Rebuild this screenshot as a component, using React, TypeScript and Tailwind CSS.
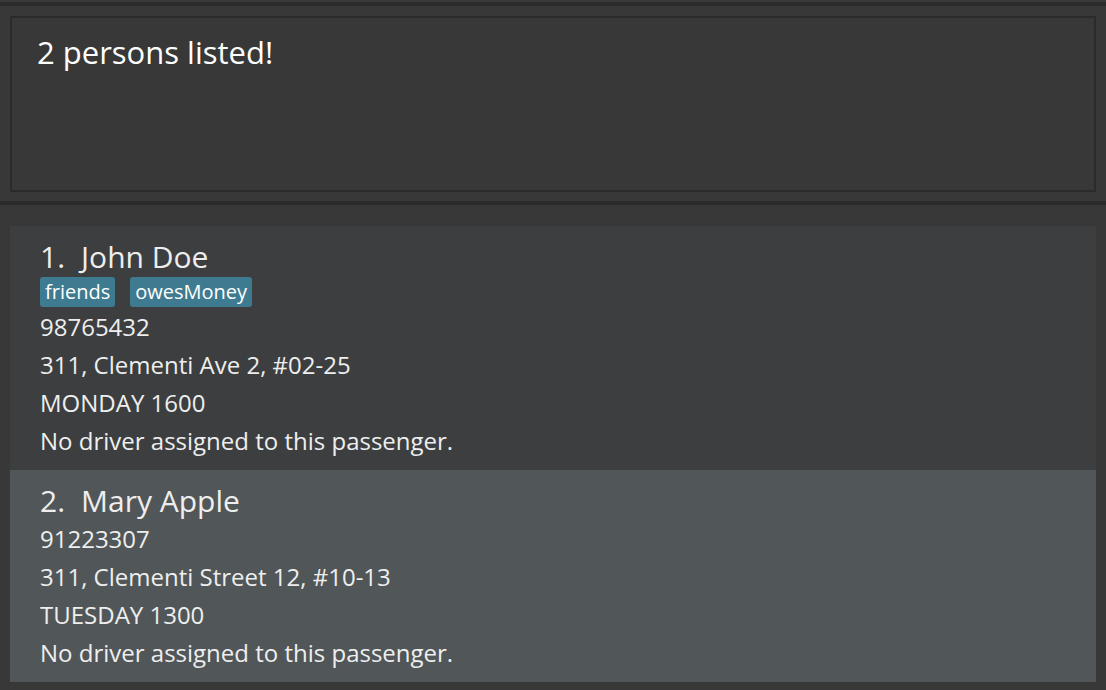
import React from "react";

type Person = {
	name: string;
	tags: string[];
	phone: string;
	address: string;
	slot: string;
};

const persons: Person[] = [
	{
		name: "John Doe",
		tags: ["friends", "owesMoney"],
		phone: "98765432",
		address: "311, Clementi Ave 2, #02-25",
		slot: "MONDAY 1600",
	},
	{
		name: "Mary Apple",
		tags: [],
		phone: "91223307",
		address: "311, Clementi Street 12, #10-13",
		slot: "TUESDAY 1300",
	},
];

function PersonCard({ person, index }: { person: Person; index: number }) {
	const odd = index % 2 === 1;
	return (
		<div
			className={`${odd ? "bg-[#515658]" : "bg-[#3c3e40]"} pl-[30px] pt-[14px] pb-[10px] text-[#eeeeee]`}>
			<div className="h-[34px] flex items-center text-[30px] font-medium leading-none">
				<span>{index + 1}.</span>
				<span className="ml-[16px]">{person.name}</span>
			</div>
			{person.tags.length > 0 ? (
				<div className="mt-[3px] mb-[1px] flex gap-[15px] h-[30px]">
					{person.tags.map((tag) => (
						<span
							key={tag}
							className="rounded-[3px] bg-[#3e7b91] px-[5px] text-[20px] leading-[30px] text-white">
							{tag}
						</span>
					))}
				</div>
			) : (
				<div className="h-[2px]" />
			)}
			{/* ===== Details ===== */}
			<div className="text-[24px] leading-[38px]">
				<div>{person.phone}</div>
				<div>{person.address}</div>
				<div>{person.slot}</div>
				<div>No driver assigned to this passenger.</div>
			</div>
		</div>
	);
}

export default function App() {
	return (
		<div
			className="h-[690px] w-full overflow-hidden bg-[#383838]"
			style={{ fontFamily: '"Open Sans", "Noto Sans", sans-serif' }}>
			<div className="h-[2px] bg-[#3a3a3a]" />
			<div className="h-[4px] bg-[#2b2b2b]" />

			{/* ===== Result box ===== */}
			<div className="pt-[10px] px-[10px]">
				<div className="h-[176px] border-2 border-[#2b2b2b] bg-[#383838] pl-[25px] pt-[14px]">
					<p className="text-[31px] leading-[40px] text-white">2 persons listed!</p>
				</div>
			</div>

			<div className="mt-[9px] h-[4px] bg-[#2b2b2b]" />

			{/* ===== Person list ===== */}
			<div className="mt-[21px] mx-[10px]">
				{persons.map((p, i) => (
					<PersonCard key={p.name} person={p} index={i} />
				))}
			</div>
		</div>
	);
}
